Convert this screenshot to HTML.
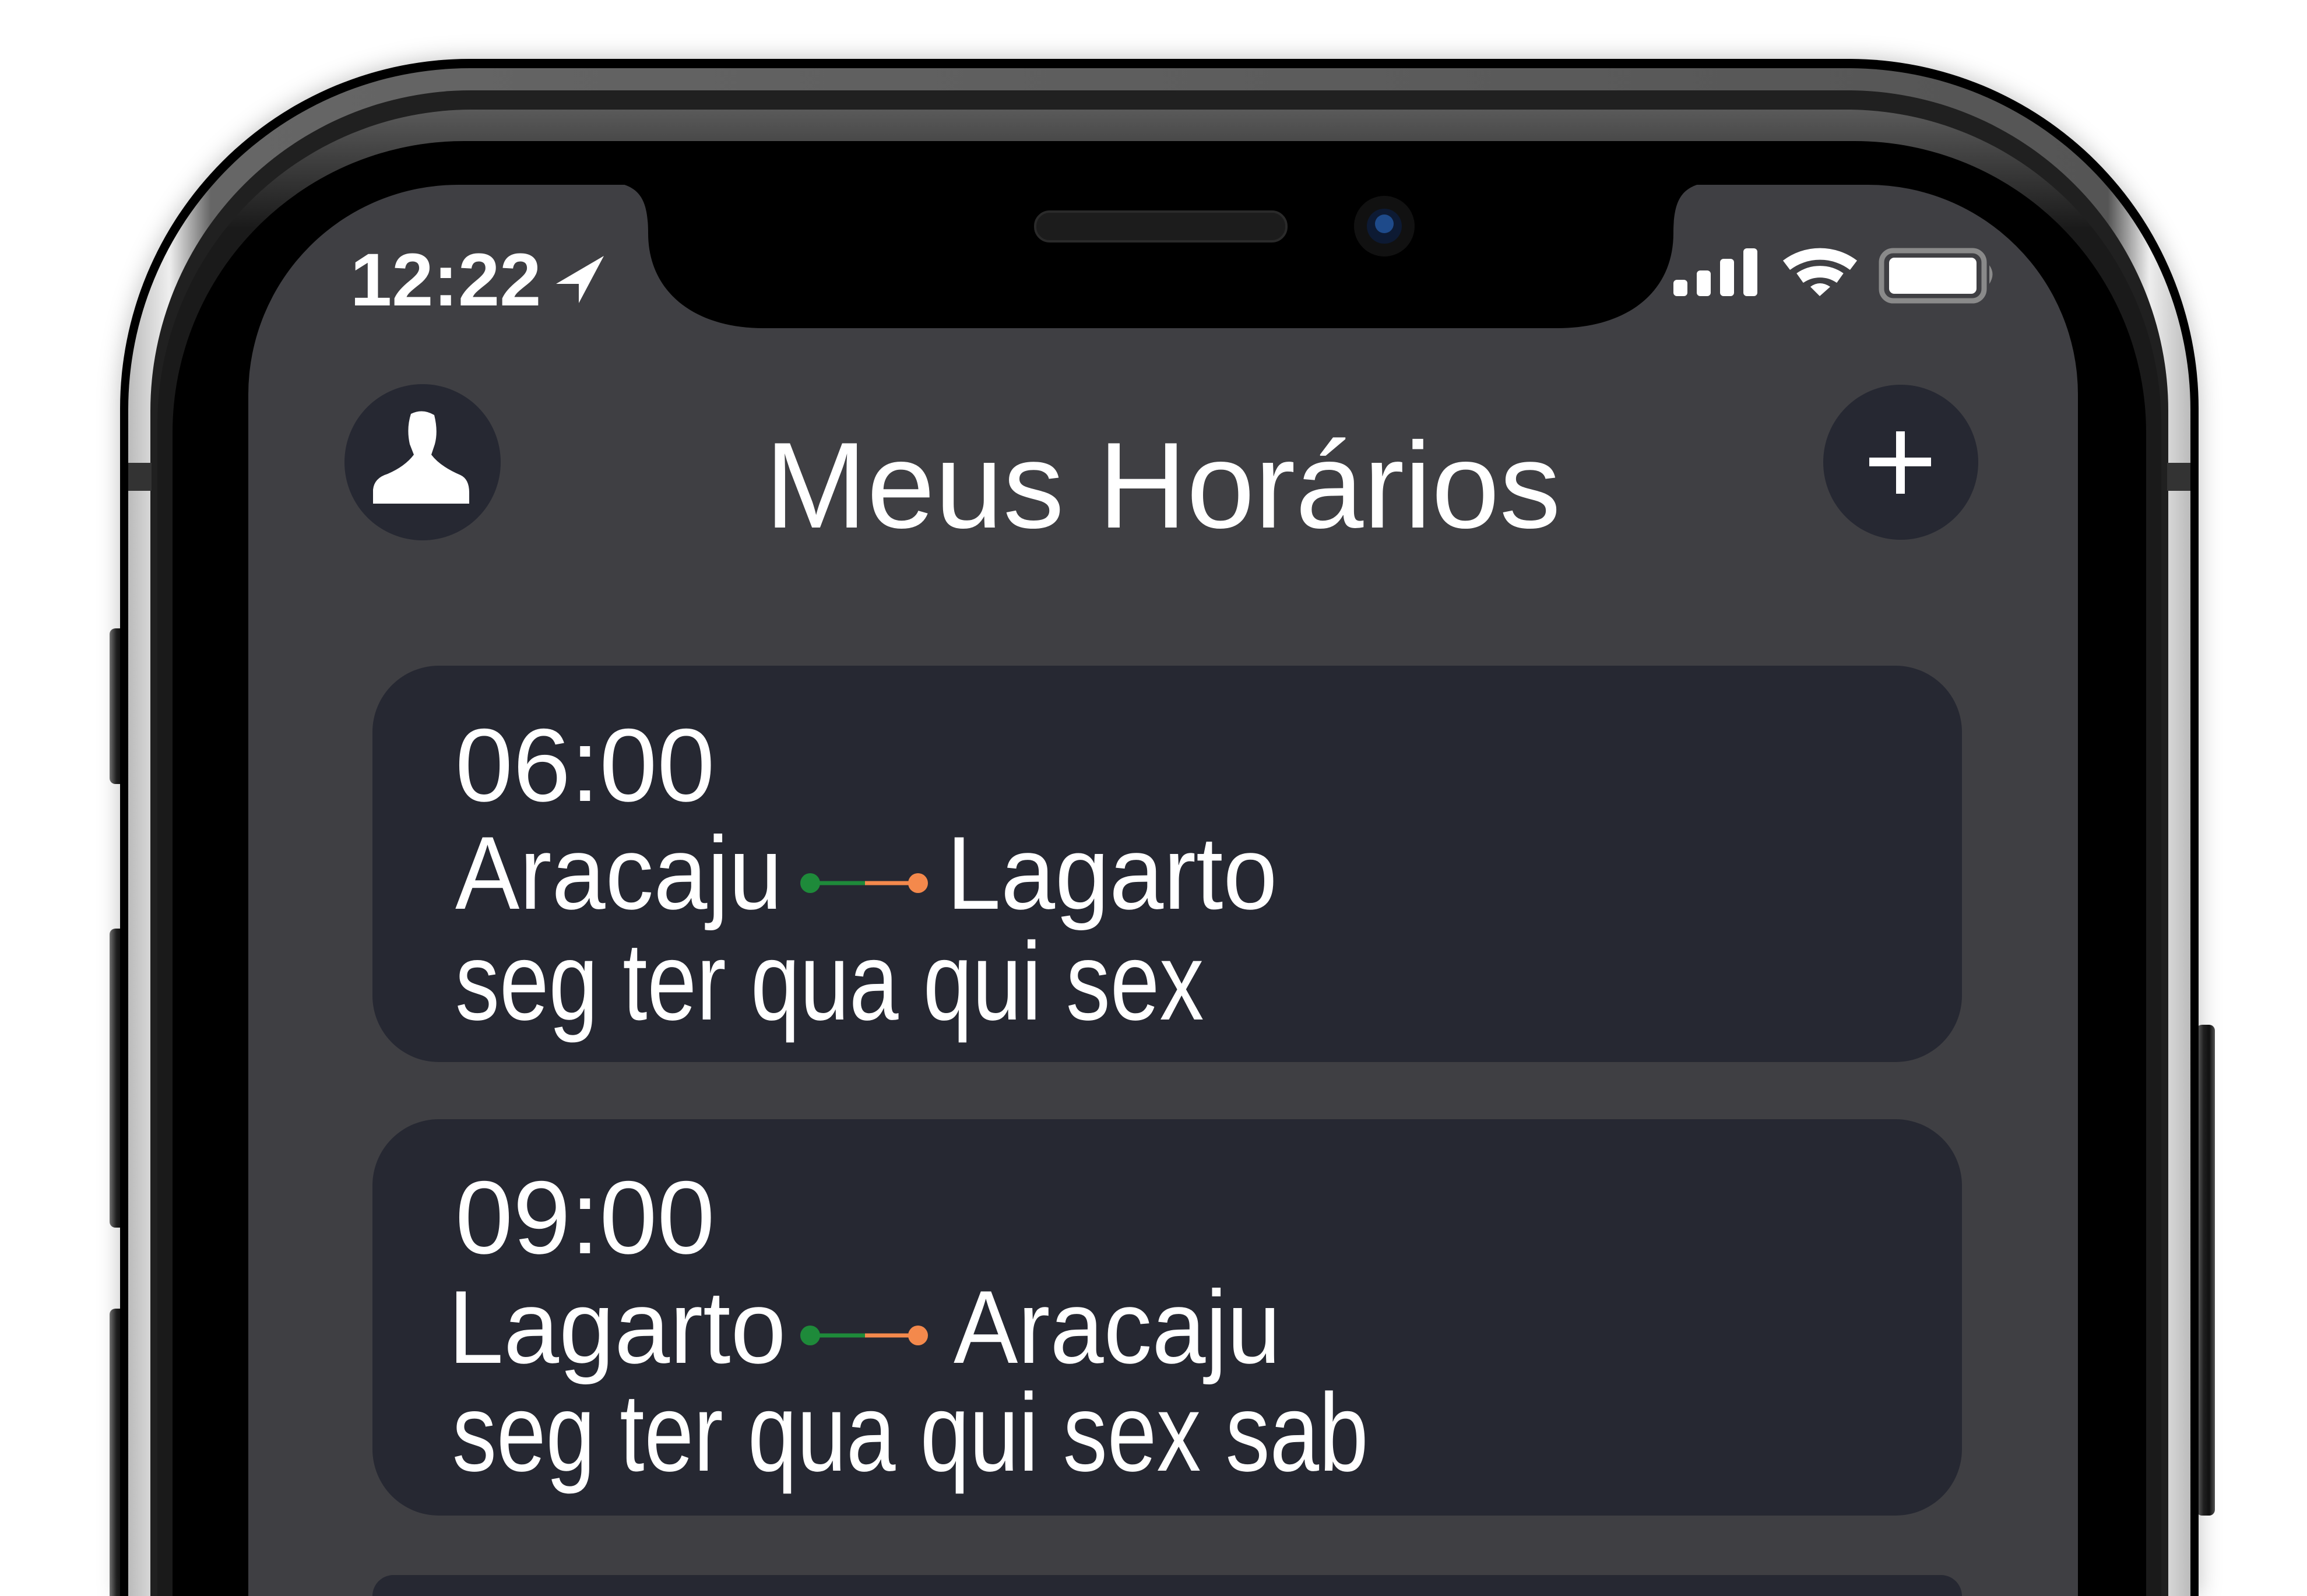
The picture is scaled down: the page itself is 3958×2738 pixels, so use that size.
<!DOCTYPE html>
<html><head><meta charset="utf-8"><style>
html,body{margin:0;padding:0;background:#fff;width:3958px;height:2738px;overflow:hidden;}
#w{position:relative;width:3958px;height:2738px;overflow:hidden;font-family:"Liberation Sans",sans-serif;}
.a{position:absolute;}
.btn{position:absolute;background:linear-gradient(90deg,#777,#222 40%,#111 70%,#555);border-radius:10px;}
.t{position:absolute;color:#fff;white-space:nowrap;line-height:1;}
.card{position:absolute;left:639px;width:2727px;height:680px;border-radius:114px;background:#262832;}
</style></head><body><div id="w">
<div class="btn" style="left:188px;top:1078px;width:30px;height:267px"></div>
<div class="btn" style="left:188px;top:1593px;width:30px;height:513px"></div>
<div class="btn" style="left:188px;top:2245px;width:30px;height:493px;border-radius:10px 10px 0 0"></div>
<div class="btn" style="left:3768px;top:1758px;width:32px;height:842px"></div>
<div class="a" style="left:206px;top:101px;width:3566px;height:2637px;border-radius:600px 600px 0 0;background:#000;box-shadow:0 0 40px rgba(0,0,0,0.25)"></div>
<div class="a" style="left:220px;top:117px;width:3538px;height:2621px;border-radius:586px 586px 0 0;background:linear-gradient(90deg,#bbb,#eee 2%,#666 4%,#555 96%,#eee 98%,#bbb);"></div>
<div class="a" style="left:258px;top:155px;width:3462px;height:2583px;border-radius:550px 550px 0 0;background:#202020"></div>
<div class="a" style="left:270px;top:188px;width:3438px;height:2550px;border-radius:540px 540px 0 0;background:linear-gradient(180deg,#5a5a5a,#1a1a1a 8%);"></div>
<div class="a" style="left:296px;top:242px;width:3386px;height:2496px;border-radius:500px 500px 0 0;background:#000"></div>
<div class="a" style="left:220px;top:794px;width:40px;height:48px;background:#333"></div>
<div class="a" style="left:3718px;top:794px;width:40px;height:48px;background:#333"></div>
<div class="a" style="left:426px;top:317px;width:3139px;height:2421px;border-radius:360px 360px 0 0;background:#3f3f43"></div>

<svg class="a" style="left:0;top:0" width="3958" height="2738" viewBox="0 0 3958 2738">
<path d="M1030 310 C1090 314 1112 330 1112 400 C1112 500 1190 563 1310 563 L2672 563 C2793 563 2871 500 2871 400 C2871 330 2893 314 2953 310 Z" fill="#000"/>
<rect x="1776" y="363" width="431" height="51" rx="25" fill="#1c1c1c" stroke="#2a2a2a" stroke-width="4"/>
<circle cx="2375" cy="388" r="52" fill="#111"/>
<circle cx="2375" cy="388" r="30" fill="#0d1a33"/>
<circle cx="2375" cy="384" r="16" fill="#1e4a8a"/>
<path d="M1036 439 L954 487 L993 487 L993 520 Z" fill="#fff"/>
<rect x="2871" y="480" width="24" height="28" rx="6" fill="#fff"/>
<rect x="2911" y="464" width="24" height="44" rx="6" fill="#fff"/>
<rect x="2951" y="444" width="24" height="64" rx="6" fill="#fff"/>
<rect x="2991" y="426" width="24" height="82" rx="6" fill="#fff"/>
<path d="M3065 455 A95 95 0 0 1 3180 455" stroke="#fff" stroke-width="20" fill="none"/>
<path d="M3088 477 A60 60 0 0 1 3157 477" stroke="#fff" stroke-width="20" fill="none"/>
<path d="M3106 492 Q3122 480 3140 492 L3122 508 Z" fill="#fff"/>
<rect x="3228" y="430" width="176" height="86" rx="20" fill="none" stroke="#8a8a8a" stroke-width="9"/>
<rect x="3241" y="442" width="150" height="62" rx="9" fill="#fff"/>
<path d="M3413 455 Q3424 470 3413 487 Z" fill="#8a8a8a"/>
<circle cx="725" cy="793" r="134" fill="#262832"/>
<path d="M705 710 Q725 700 745 712 Q752 740 746 762 L740 780 Q755 800 790 815 Q805 822 805 845 L805 864 L640 864 L640 840 Q642 820 665 813 Q695 800 710 780 L703 762 Q697 735 705 710 Z" fill="#fff"/>
<circle cx="3261" cy="793" r="133" fill="#262832"/>
<rect x="3253" y="740" width="15" height="107" fill="#fff"/>
<rect x="3207" y="785" width="106" height="15" fill="#fff"/>
</svg>

<div class="t" style="left:601px;top:417px;font-size:128px;font-weight:bold;">12:22</div>
<div class="t" style="left:0;width:3990px;text-align:center;top:728px;font-size:210px;">Meus Horários</div>

<div class="card" style="top:1142px"></div>
<div class="card" style="top:1920px"></div>
<div class="card" style="top:2702px;height:36px;border-radius:114px 114px 0 0"></div>

<div class="t" style="left:781px;top:1224px;font-size:178px;">06:00</div>
<div class="t" style="left:781px;top:1409px;font-size:178px;transform:scaleX(0.93);transform-origin:left;">Aracaju</div>
<div class="t" style="left:1624px;top:1409px;font-size:178px;transform:scaleX(0.94);transform-origin:left;">Lagarto</div>
<div class="t" style="left:781px;top:1589px;font-size:190px;transform:scaleX(0.80);transform-origin:left;">seg ter qua qui sex</div>

<div class="t" style="left:781px;top:2000px;font-size:178px;">09:00</div>
<div class="t" style="left:769px;top:2188px;font-size:178px;transform:scaleX(0.96);transform-origin:left;">Lagarto</div>
<div class="t" style="left:1636px;top:2188px;font-size:178px;transform:scaleX(0.93);transform-origin:left;">Aracaju</div>
<div class="t" style="left:776px;top:2363px;font-size:190px;transform:scaleX(0.80);transform-origin:left;">seg ter qua qui sex sab</div>

<svg class="a" style="left:0;top:0" width="3958" height="2738" viewBox="0 0 3958 2738">
<line x1="1390" y1="1515" x2="1484" y2="1515" stroke="#1e8a3a" stroke-width="7"/>
<line x1="1484" y1="1515" x2="1575" y2="1515" stroke="#f4894c" stroke-width="7"/>
<circle cx="1390" cy="1515" r="17" fill="#1e8a3a"/>
<circle cx="1575" cy="1515" r="17" fill="#f4894c"/>
<line x1="1390" y1="2291" x2="1484" y2="2291" stroke="#1e8a3a" stroke-width="7"/>
<line x1="1484" y1="2291" x2="1575" y2="2291" stroke="#f4894c" stroke-width="7"/>
<circle cx="1390" cy="2291" r="17" fill="#1e8a3a"/>
<circle cx="1575" cy="2291" r="17" fill="#f4894c"/>
</svg>
</div></body></html>
